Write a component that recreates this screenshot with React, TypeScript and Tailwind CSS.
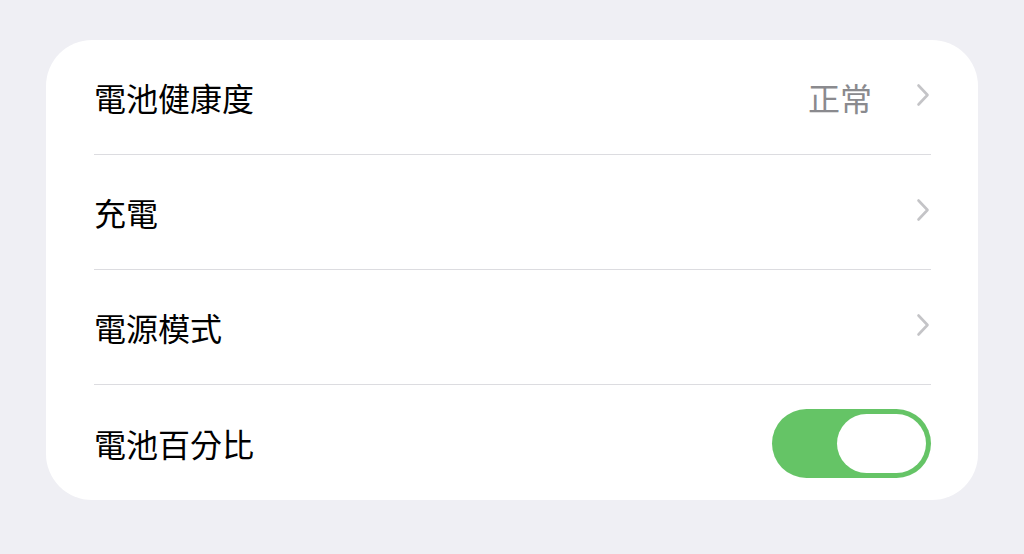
const rows = [
  { label: "電池健康度", value: "正常", chevron: true },
  { label: "充電", chevron: true },
  { label: "電源模式", chevron: true },
  { label: "電池百分比", toggle: true },
];

function Chevron() {
  return (
    <svg width="14" height="24" viewBox="0 0 14 24" fill="none" className="-mt-[4px] shrink-0">
      <path d="M2.5 2.5 L11.5 12 L2.5 21.5" stroke="#c4c4c7" strokeWidth="2.6" strokeLinecap="round" strokeLinejoin="round" />
    </svg>
  );
}

function Toggle() {
  return (
    <div className="mt-[2px] flex h-[69px] w-[159px] items-center justify-end rounded-full bg-[#65c466] pr-[5px]">
      <div className="h-[59px] w-[89px] rounded-full bg-white" />
    </div>
  );
}

export default function App() {
  return (
    <main
      className="min-h-[554px] w-full bg-[#efeff4] px-[46px] pt-[40px]"
      style={{ fontFamily: '"Noto Sans CJK TC", "Noto Sans", sans-serif' }}
    >
      <section className="overflow-hidden rounded-[46px] bg-white">
        {rows.map((row, i) => (
          <div key={row.label} className="pl-[48px] pr-[47px]">
            <div
              className={
                "flex h-[115px] items-center justify-between " +
                (i < rows.length - 1 ? "border-b border-[#dcdce0]" : "")
              }
            >
              <span className="text-[32px] leading-none text-black">{row.label}</span>
              {row.toggle ? (
                <Toggle />
              ) : (
                <div className="flex items-center gap-[44px] pr-px">
                  {row.value && (
                    <span className="text-[32px] leading-none text-[#8a8a8e]">{row.value}</span>
                  )}
                  <Chevron />
                </div>
              )}
            </div>
          </div>
        ))}
      </section>
    </main>
  );
}
